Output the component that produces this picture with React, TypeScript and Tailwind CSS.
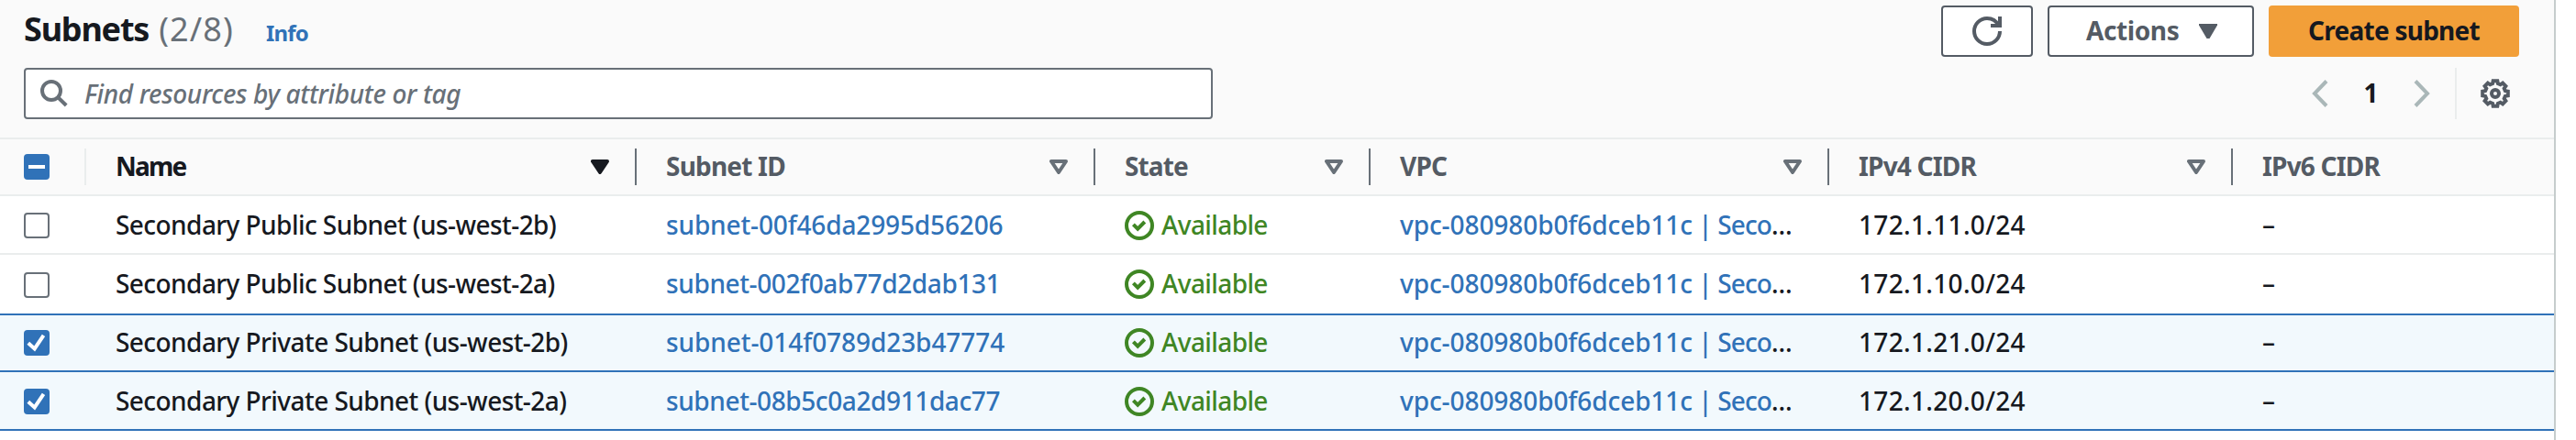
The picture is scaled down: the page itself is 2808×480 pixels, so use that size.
import React from "react";
import clsx from "clsx";

type Subnet = {
  name: string;
  id: string;
  idTracking: string;
  cidr: string;
  selected: boolean;
};

const subnets: Subnet[] = [
  { name: "Secondary Public Subnet (us-west-2b)", id: "subnet-00f46da2995d56206", idTracking: "tracking-[-0.14px]", cidr: "172.1.11.0/24", selected: false },
  { name: "Secondary Public Subnet (us-west-2a)", id: "subnet-002f0ab77d2dab131", idTracking: "tracking-[-0.38px]", cidr: "172.1.10.0/24", selected: false },
  { name: "Secondary Private Subnet (us-west-2b)", id: "subnet-014f0789d23b47774", idTracking: "tracking-[-0.07px]", cidr: "172.1.21.0/24", selected: true },
  { name: "Secondary Private Subnet (us-west-2a)", id: "subnet-08b5c0a2d911dac77", idTracking: "tracking-[-0.4px]", cidr: "172.1.20.0/24", selected: true },
];

const rowGrid = "grid h-16 grid-cols-[94px_600px_500px_300px_500px_440px_1fr] items-center";

const gearPoints = Array.from({ length: 8 }, (_, k) =>
  [
    [-15, 5.6],
    [-9.5, 7],
    [9.5, 7],
    [15, 5.6],
  ].map(([deg, r]) => {
    const a = ((k * 45 + deg) * Math.PI) / 180;
    return `${(8 + r * Math.sin(a)).toFixed(2)},${(8 - r * Math.cos(a)).toFixed(2)}`;
  })
)
  .flat()
  .join(" ");

function SearchIcon() {
  return (
    <svg className="size-[30px] shrink-0" viewBox="0 0 30 30" fill="none" stroke="#687078" strokeWidth="4">
      <circle cx="12" cy="12" r="10" />
      <path d="M19 19l9.2 9" />
    </svg>
  );
}

function RefreshIcon() {
  return (
    <svg className="size-8" viewBox="0 0 16 16" fill="none" stroke="#545b64" strokeWidth="2">
      <path d="M15 8c0 3.87-3.13 7-7 7s-7-3.13-7-7 3.13-7 7-7c2.79 0 5.2 1.63 6.33 4" />
      <path d="M10 5h5V0" />
    </svg>
  );
}

function GearIcon() {
  return (
    <svg className="size-8" viewBox="0 0 16 16" fill="none" stroke="#545b64" strokeWidth="2">
      <polygon points={gearPoints} />
      <circle cx="8" cy="8" r="2" />
    </svg>
  );
}

function Chevron({ next = false }: { next?: boolean }) {
  return (
    <svg className="h-[30px] w-[18px]" viewBox="0 0 18 30" fill="none" stroke="#aab7b8" strokeWidth="4">
      <path d={next ? "M2 1.5L15 15L2 28.5" : "M16 1.5L3 15L16 28.5"} />
    </svg>
  );
}

function SortIcon({ active = false }: { active?: boolean }) {
  return (
    <svg
      className={clsx("h-4 w-5", active ? "fill-[#16191f] stroke-[#16191f]" : "fill-none stroke-[#687078]")}
      viewBox="0 0 20 16"
      strokeWidth="4"
      strokeLinejoin="round"
    >
      <path d="M2 2h16l-8 12z" />
    </svg>
  );
}

function StatusIcon() {
  return (
    <svg className="size-8" viewBox="0 0 16 16" fill="none" stroke="#3f8624" strokeWidth="2">
      <circle cx="8" cy="8" r="7" />
      <path d="M4.7 7.4l2.4 2.4 3.8-3.8" />
    </svg>
  );
}

function Checkbox({ state }: { state: "off" | "on" | "mixed" }) {
  if (state === "off") {
    return <span className="size-7 rounded-[4px] border-2 border-[#687078] bg-white" />;
  }
  return (
    <span className="size-7 rounded-[4px] bg-[#3072b8]">
      <svg className="size-7" viewBox="0 0 28 28" fill="none" stroke="#fff" strokeWidth="4">
        <path d={state === "on" ? "M4.8 14.2l6.9 6.2l9.8-14.6" : "M5 14h18"} />
      </svg>
    </span>
  );
}

function HeaderCell({ label, tracking, active = false }: { label: string; tracking: string; active?: boolean }) {
  return (
    <div
      className={clsx(
        "flex h-10 items-center justify-between border-r-2 border-[#687078] pr-7 pl-8 font-bold",
        active ? "text-[#16191f]" : "text-[#545b64]"
      )}
    >
      <span className={clsx("pb-0.5", tracking)}>{label}</span>
      <SortIcon active={active} />
    </div>
  );
}

export default function App() {
  return (
    <div className="h-[480px] w-full overflow-hidden bg-white font-['Noto_Sans',sans-serif] text-[28px] leading-[38px] font-medium whitespace-nowrap text-[#16191f]">
      <main className="h-full w-[2786px] border-r-2 border-[#c6cdcd] bg-white">
        <header className="flex h-[150px] flex-col gap-3 bg-[#fafafa] pt-1.5 pr-[38px] pl-[26px]">
          <div className="flex h-14 items-center justify-between">
            <div className="flex items-baseline pb-1">
              <h1 className="text-[36px] leading-[48px] font-bold tracking-[-1.2px]">Subnets</h1>
              <span className="ml-[11px] text-[36px] leading-[48px] font-normal tracking-[1.1px] text-[#687078]">(2/8)</span>
              <a className="ml-[35px] text-2xl font-bold tracking-[-0.8px] text-[#3072b8]">Info</a>
            </div>
            <div className="flex gap-4">
              <button className="flex h-14 w-[100px] items-center justify-center rounded-[4px] border-2 border-[#545b64] bg-white">
                <RefreshIcon />
              </button>
              <button className="flex h-14 w-[225px] items-center justify-between rounded-[4px] border-2 border-[#545b64] bg-white pr-[38px] pl-10 font-bold text-[#545b64]">
                <span className="pb-0.5 tracking-[-0.4px]">Actions</span>
                <svg className="h-4 w-5 fill-[#545b64]" viewBox="0 0 20 16">
                  <path d="M0 0h20v1.5L11.5 16h-3L0 1.5z" />
                </svg>
              </button>
              <button className="flex h-14 w-[273px] items-center justify-center rounded-[4px] bg-[#f29f39] font-bold">
                <span className="pb-0.5 tracking-[-0.75px]">Create subnet</span>
              </button>
            </div>
          </div>
          <div className="flex h-14 items-center justify-between">
            <div className="flex h-14 w-[1296px] items-center gap-[18px] rounded-[4px] border-2 border-[#687078] bg-white pl-4">
              <SearchIcon />
              <span className="tracking-[-0.35px] text-[#687078] italic">Find resources by attribute or tag</span>
            </div>
            <div className="flex h-14 items-center pr-2.5">
              <Chevron />
              <span className="w-[93px] pb-0.5 text-center font-bold">1</span>
              <Chevron next />
              <div className="ml-[27px] flex h-14 items-center border-l-2 border-[#eaeded] pl-[26px]">
                <GearIcon />
              </div>
            </div>
          </div>
        </header>

        <div className={clsx(rowGrid, "bg-[#fafafa] shadow-[inset_0_2px_#eaeded,inset_0_-2px_#eaeded]")}>
          <div className="flex h-10 items-center border-r-2 border-[#eaeded] pl-[26px]">
            <Checkbox state="mixed" />
          </div>
          <HeaderCell label="Name" tracking="tracking-[-1.8px]" active />
          <HeaderCell label="Subnet ID" tracking="tracking-[-0.8px]" />
          <HeaderCell label="State" tracking="tracking-[-0.9px]" />
          <HeaderCell label="VPC" tracking="tracking-[-0.8px]" />
          <HeaderCell label="IPv4 CIDR" tracking="tracking-[-0.8px]" />
          <div className="pb-0.5 pl-8 font-bold tracking-[-0.8px] text-[#545b64]">IPv6 CIDR</div>
        </div>

        {subnets.map((s, i) => {
          const nextSelected = subnets[i + 1]?.selected ?? false;
          const prevSelected = subnets[i - 1]?.selected ?? false;
          return (
            <div
              key={s.id}
              className={clsx(
                rowGrid,
                s.selected && "bg-[#f2f9fd]",
                s.selected && !prevSelected && "shadow-[inset_0_2px_#3072b8,inset_0_-2px_#3072b8]",
                s.selected && prevSelected && "shadow-[inset_0_-2px_#3072b8]",
                !s.selected && !nextSelected && "shadow-[inset_0_-2px_#eaeded]"
              )}
            >
              <div className={clsx("flex pl-[26px]", !s.selected && nextSelected && "pt-0.5")}>
                <Checkbox state={s.selected ? "on" : "off"} />
              </div>
              <div className="pb-0.5 pl-8 tracking-[-0.56px]">{s.name}</div>
              <div className={clsx("pb-0.5 pl-8 text-[#3072b8]", s.idTracking)}>{s.id}</div>
              <div className="flex items-center gap-2 pl-8 text-[#3f8624]">
                <StatusIcon />
                <span className="pb-0.5 tracking-[-0.6px]">Available</span>
              </div>
              <div className="pb-0.5 pl-8">
                <span className="text-[#3072b8]">
                  <span className="tracking-[-0.08px]">vpc-080980b0f6dceb11c</span>
                  <span className="tracking-[-0.9px]"> | Seco</span>
                </span>
                <span className="tracking-[0.4px]">…</span>
              </div>
              <div className="pb-0.5 pl-8 tracking-[0.32px]">{s.cidr}</div>
              <div className="pb-0.5 pl-8">–</div>
            </div>
          );
        })}
      </main>
    </div>
  );
}
